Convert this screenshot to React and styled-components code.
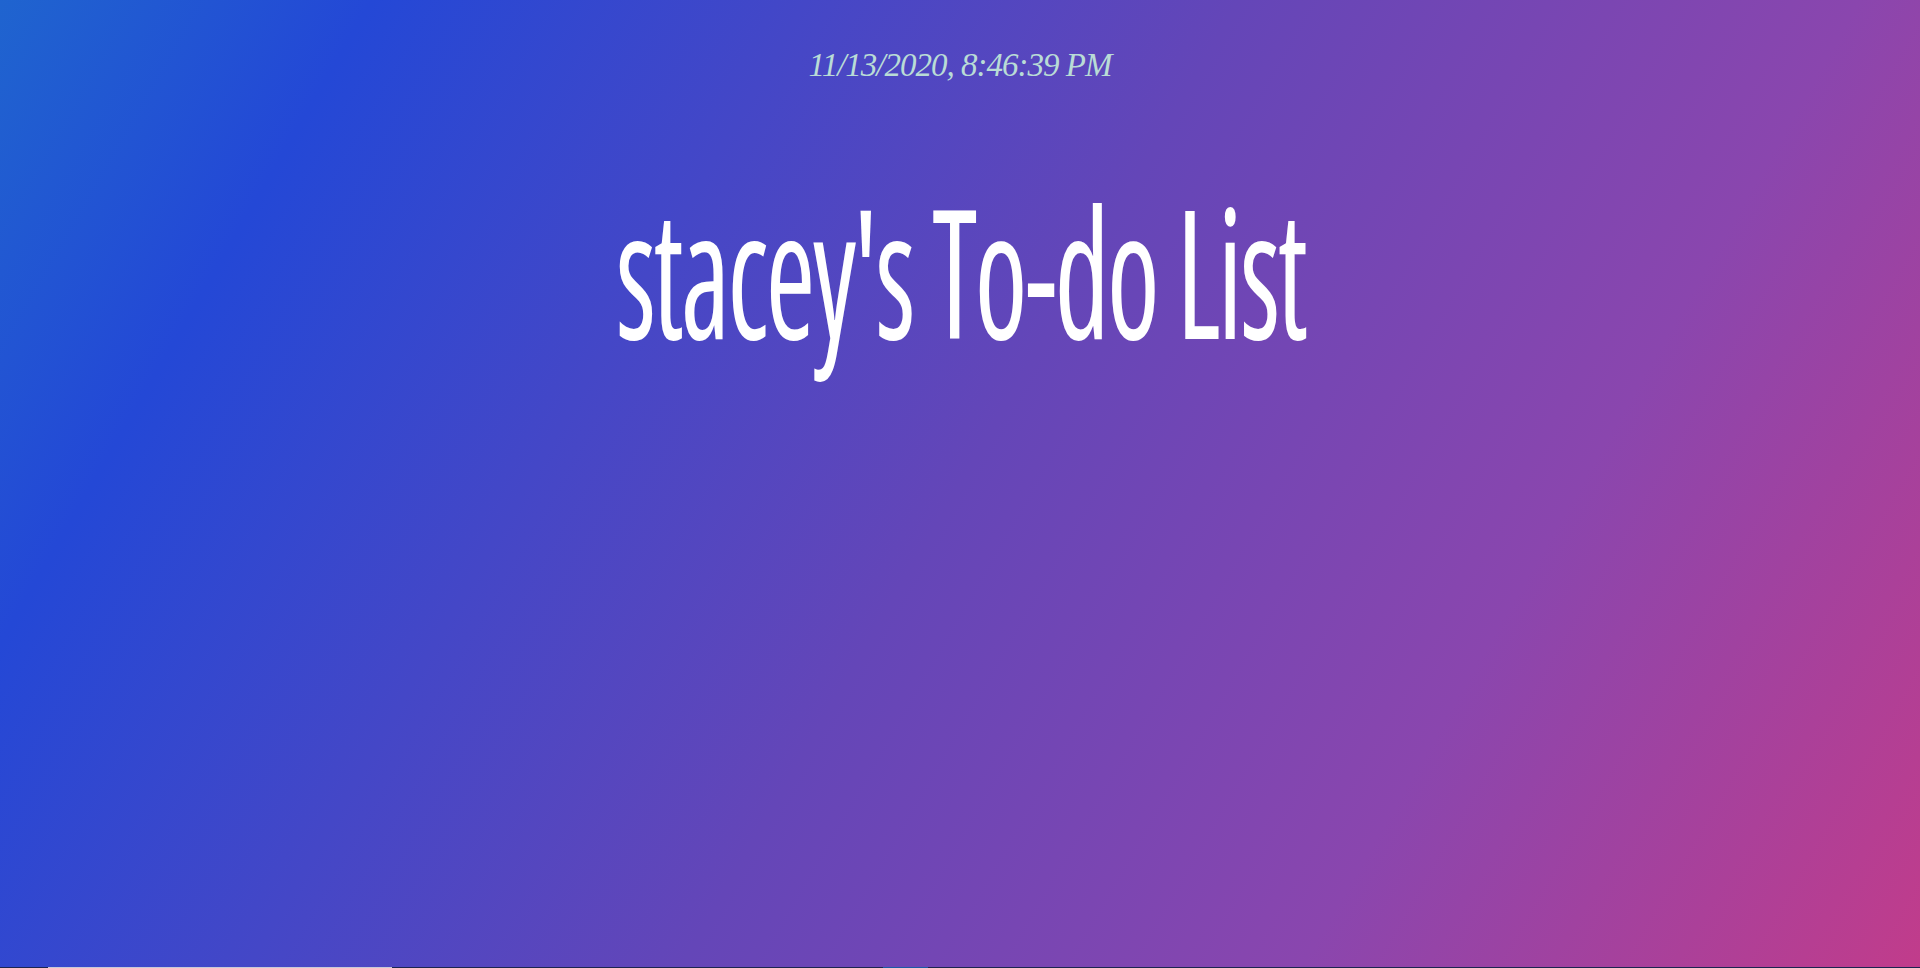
import React from "react";
import styled, { createGlobalStyle } from "styled-components";

const GlobalStyle = createGlobalStyle`
    html, body {
        margin: 0;
        padding: 0;
        height: 100%;
        overflow: hidden;
    }
    #root {
        height: 100%;
    }
`;

const Page = styled.div`
    height: 968px;
    display: flex;
    flex-direction: column;
    background: linear-gradient(120deg, #1f64cf 0%, #2448d6 15%, #6446b8 50%, #8a46ae 75%, #c13c8b 100%);
`;

const Header = styled.header`
    flex: 1;
    display: flex;
    flex-direction: column;
    align-items: center;
    padding-top: 45px;
`;

const Clock = styled.div`
    font-family: "Liberation Serif", "DejaVu Serif", serif;
    font-style: italic;
    font-size: 33px;
    line-height: 40px;
    color: #b9dcd6;
    letter-spacing: -1px;
`;

const Title = styled.h1`
    margin: 95px 0 0;
    font-family: "Open Sans", "DejaVu Sans", sans-serif;
    font-stretch: 75%;
    font-weight: 500;
    font-size: 180px;
    line-height: 1;
    color: #ffffff;
    letter-spacing: -4px;
    transform: scaleX(0.665);
`;

// the top edge of whatever sits just below the fold
const Fold = styled.div`
    height: 1px;
    background: #1c2450;
    display: flex;
`;

const FoldPiece = styled.div`
    margin-left: ${props => props.left}px;
    width: ${props => props.width}px;
    background: ${props => props.color};
`;

export default function App() {
    return (
        <>
            <GlobalStyle />
            <Page>
                <Header>
                    <Clock>11/13/2020, 8:46:39 PM</Clock>
                    <Title>stacey's To-do List</Title>
                </Header>
                <Fold>
                    <FoldPiece left={48} width={344} color="#c9c9d6" />
                    <FoldPiece left={491} width={45} color="#1b5aa6" />
                </Fold>
            </Page>
        </>
    );
}
